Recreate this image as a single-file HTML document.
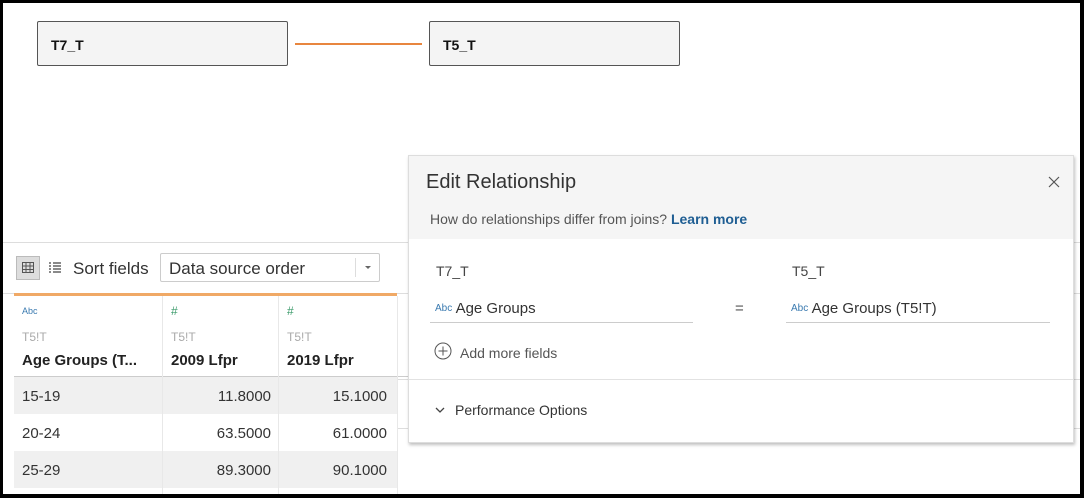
<!DOCTYPE html>
<html><head><style>
*{margin:0;padding:0;box-sizing:border-box}
body{width:1084px;height:498px;overflow:hidden;background:#000;font-family:"Liberation Sans",Arial,sans-serif;position:relative}
#w{position:absolute;left:3px;top:3px;width:1077px;height:491px;background:#fff;overflow:hidden}
.a{position:absolute}
.tbl{position:absolute;background:#f4f4f4;border:1px solid #555;border-radius:2px;height:45px;width:251px;font-weight:bold;font-size:14px;padding:15px 0 0 13px;color:#111}
.hl{position:absolute;height:1px;background:#ddd}
.cell{position:absolute;font-size:15px;color:#333}
</style></head><body><div id="w">
<div class="tbl" style="left:34px;top:18px">T7_T</div>
<div class="tbl" style="left:426px;top:18px">T5_T</div>
<div class="a" style="left:292px;top:40px;width:127px;height:2px;background:#e8863f"></div>

<div class="hl" style="left:0;top:239px;width:1077px"></div>
<div class="a" style="left:13px;top:253px;width:24px;height:24px;background:#ddd;border:1px solid #bbb"></div>
<svg class="a" style="left:19px;top:259px" width="12" height="11"><rect x="0.5" y="0.5" width="11" height="10" fill="none" stroke="#555"/><path d="M0 4H12M0 7.5H12M4 0V11M8 0V11" stroke="#555"/></svg>
<svg class="a" style="left:46px;top:259px" width="12" height="11"><path d="M0 1H2M4 1H12M0 4H2M4 4H12M0 7H2M4 7H12M0 10H2M4 10H12" stroke="#444" stroke-width="1.3"/></svg>
<div class="a" style="left:70px;top:256px;font-size:17px;color:#333">Sort fields</div>
<div class="a" style="left:157px;top:250px;width:220px;height:29px;border:1px solid #ccc;border-radius:2px;background:#fff;font-size:17px;color:#333;padding:5px 0 0 8px">Data source order</div>
<div class="a" style="left:352px;top:255px;width:1px;height:19px;background:#ddd"></div>
<div class="a" style="left:362px;top:263px;border-left:3px solid transparent;border-right:3px solid transparent;border-top:3px solid #666"></div>
<div class="hl" style="left:0;top:290px;width:410px"></div>
<div class="a" style="left:11px;top:290px;width:383px;height:3px;background:#f0a966"></div>
<div class="a" style="left:11px;top:374px;width:383px;height:37px;background:#f0f0f0"></div>
<div class="a" style="left:11px;top:448px;width:383px;height:37px;background:#f0f0f0"></div>
<div class="hl" style="left:11px;top:373px;width:400px;background:#ccc"></div>
<div class="a" style="left:159px;top:293px;width:1px;height:200px;background:#e8e8e8"></div>
<div class="a" style="left:275px;top:293px;width:1px;height:200px;background:#e8e8e8"></div>
<div class="a" style="left:394px;top:293px;width:1px;height:200px;background:#e8e8e8"></div>
<div class="a" style="left:19px;top:303px;font-size:9px;color:#3a7ab0">Abc</div>
<div class="a" style="left:168px;top:301px;font-size:12px;color:#3a9a6a">#</div>
<div class="a" style="left:284px;top:301px;font-size:12px;color:#3a9a6a">#</div>
<div class="cell" style="left:19px;top:327px;font-size:12px;color:#aaa">T5!T</div>
<div class="cell" style="left:168px;top:327px;font-size:12px;color:#aaa">T5!T</div>
<div class="cell" style="left:284px;top:327px;font-size:12px;color:#aaa">T5!T</div>
<div class="cell" style="left:19px;top:349px;font-weight:bold;color:#222">Age Groups (T...</div>
<div class="cell" style="left:168px;top:349px;font-weight:bold;color:#222">2009 Lfpr</div>
<div class="cell" style="left:284px;top:349px;font-weight:bold;color:#222">2019 Lfpr</div>
<div class="cell" style="left:19px;top:385px">15-19</div>
<div class="cell" style="left:19px;top:422px">20-24</div>
<div class="cell" style="left:19px;top:459px">25-29</div>
<div class="cell" style="left:159px;width:109px;text-align:right;top:385px">11.8000</div>
<div class="cell" style="left:159px;width:109px;text-align:right;top:422px">63.5000</div>
<div class="cell" style="left:159px;width:109px;text-align:right;top:459px">89.3000</div>
<div class="cell" style="left:275px;width:109px;text-align:right;top:385px">15.1000</div>
<div class="cell" style="left:275px;width:109px;text-align:right;top:422px">61.0000</div>
<div class="cell" style="left:275px;width:109px;text-align:right;top:459px">90.1000</div>
<div class="hl" style="left:395px;top:425px;width:682px"></div>
<div class="hl" style="left:395px;top:376px;width:682px"></div>
<div class="hl" style="left:395px;top:290px;width:682px"></div>

<div class="a" style="left:405px;top:152px;width:666px;height:288px;background:#fff;border:1px solid #ddd;box-shadow:1px 2px 3px rgba(0,0,0,.25)">
 <div class="a" style="left:0;top:0;width:664px;height:83px;background:#f5f5f5"></div>
 <div class="a" style="left:17px;top:15px;font-size:20px;color:#333">Edit Relationship</div>
 <svg class="a" style="left:639px;top:20px" width="12" height="12"><path d="M1 1L11 11M11 1L1 11" stroke="#555" stroke-width="1.2"/></svg>
 <div class="a" style="left:21px;top:55px;font-size:14px;color:#555">How do relationships differ from joins? <b style="color:#1f5e93">Learn more</b></div>
 <div class="a" style="left:27px;top:107px;font-size:14px;color:#444">T7_T</div>
 <div class="a" style="left:383px;top:107px;font-size:14px;color:#444">T5_T</div>
 <div class="a" style="left:26px;top:144px;font-size:15px;color:#333"><span style="font-size:10px;color:#3a7ab0;vertical-align:2px">Abc</span> Age Groups</div>
 <div class="a" style="left:382px;top:144px;font-size:15px;color:#333"><span style="font-size:10px;color:#3a7ab0;vertical-align:2px">Abc</span> Age Groups (T5!T)</div>
 <div class="a" style="left:326px;top:144px;font-size:15px;color:#555">=</div>
 <div class="a" style="left:21px;top:166px;width:263px;height:1px;background:#ccc"></div>
 <div class="a" style="left:377px;top:166px;width:264px;height:1px;background:#ccc"></div>
 <svg class="a" style="left:25px;top:186px" width="18" height="18"><circle cx="9" cy="9" r="8" fill="none" stroke="#555"/><path d="M9 4.5V13.5M4.5 9H13.5" stroke="#555"/></svg>
 <div class="a" style="left:51px;top:189px;font-size:14px;color:#555">Add more fields</div>
 <div class="a" style="left:0;top:223px;width:664px;height:1px;background:#e2e2e2"></div>
 <svg class="a" style="left:26px;top:251px" width="10" height="7"><path d="M1 1L5 5L9 1" fill="none" stroke="#444" stroke-width="1.3"/></svg>
 <div class="a" style="left:46px;top:246px;font-size:14px;color:#333">Performance Options</div>
</div>
</div></body></html>
